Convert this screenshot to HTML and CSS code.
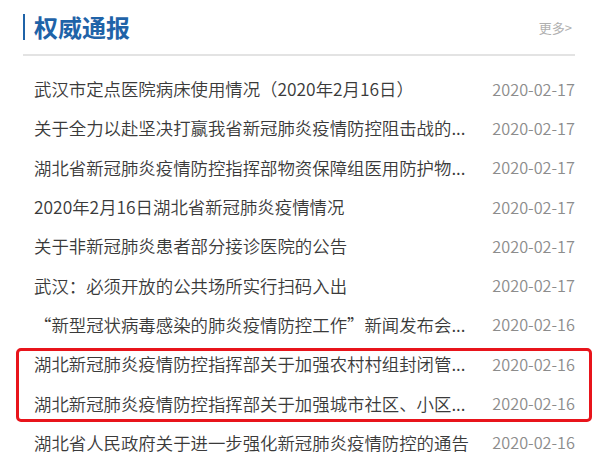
FILE: index.html
```html
<!DOCTYPE html>
<html lang="zh">
<head>
<meta charset="utf-8">
<link rel="stylesheet" href="styles.css">
</head>
<body>
<div class="panel">
  <div class="head">
    <h2 class="title">权威通报</h2>
    <span class="more">更多&gt;</span>
  </div>
  <ul class="list">
    <li class="row"><span class="txt">武汉市定点医院病床使用情况（2020年2月16日）</span><span class="date">2020-02-17</span></li>
    <li class="row"><span class="txt">关于全力以赴坚决打赢我省新冠肺炎疫情防控阻击战的...</span><span class="date">2020-02-17</span></li>
    <li class="row"><span class="txt">湖北省新冠肺炎疫情防控指挥部物资保障组医用防护物...</span><span class="date">2020-02-17</span></li>
    <li class="row"><span class="txt">2020年2月16日湖北省新冠肺炎疫情情况</span><span class="date">2020-02-17</span></li>
    <li class="row"><span class="txt">关于非新冠肺炎患者部分接诊医院的公告</span><span class="date">2020-02-17</span></li>
    <li class="row"><span class="txt">武汉：必须开放的公共场所实行扫码入出</span><span class="date">2020-02-17</span></li>
    <li class="row"><span class="txt">“新型冠状病毒感染的肺炎疫情防控工作”新闻发布会...</span><span class="date">2020-02-16</span></li>
    <li class="row"><span class="txt">湖北新冠肺炎疫情防控指挥部关于加强农村村组封闭管...</span><span class="date">2020-02-16</span></li>
    <li class="row"><span class="txt">湖北新冠肺炎疫情防控指挥部关于加强城市社区、小区...</span><span class="date">2020-02-16</span></li>
    <li class="row"><span class="txt">湖北省人民政府关于进一步强化新冠肺炎疫情防控的通告</span><span class="date">2020-02-16</span></li>
  </ul>
  <div class="mark"></div>
</div>
</body>
</html>
```

FILE: styles.css
```css
html, body {
  margin: 0;
  padding: 0;
  background: #fff;
}
body {
  font-family: "Noto Sans CJK SC", "Noto Sans", sans-serif;
  width: 600px;
  height: 469px;
  overflow: hidden;
  position: relative;
}
.panel {
  margin-left: 23px;
  width: 552px;
  padding-top: 14px;
}
.head {
  display: flex;
  align-items: flex-start;
  justify-content: space-between;
  border-bottom: 2px solid #e3e3e3;
  padding-bottom: 14px;
}
.title {
  margin: 0;
  border-left: 2px solid #1f63a8;
  padding-left: 9px;
  font-size: 24px;
  line-height: 26px;
  font-weight: bold;
  color: #1f63a8;
}
.more {
  font-size: 13px;
  color: #b0b0b0;
  margin-top: 4px;
  margin-right: 3px;
}
.list {
  list-style: none;
  margin: 0;
  padding: 13px 0 0 11px;
}
.row {
  display: flex;
  justify-content: space-between;
  align-items: center;
  height: 39.3px;
  font-size: 17.4px;
  font-weight: 350;
}
.txt {
  color: #3a3a3a;
  white-space: nowrap;
}
.date {
  color: #8c8c8c;
  font-size: 16.3px;
  white-space: nowrap;
}
.mark {
  position: absolute;
  left: 16px;
  top: 348px;
  width: 570px;
  height: 68px;
  border: 3px solid #e8141b;
  border-radius: 5px;
}
```
